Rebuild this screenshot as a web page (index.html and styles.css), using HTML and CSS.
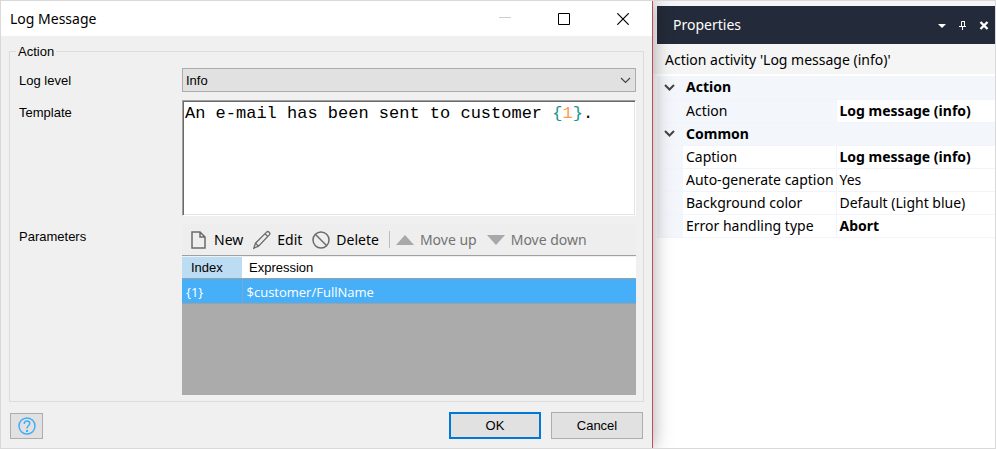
FILE: index.html
```html
<!DOCTYPE html>
<html lang="en">
<head>
<meta charset="utf-8">
<title>Log Message</title>
<link rel="stylesheet" href="styles.css">
</head>
<body>
<main class="workspace">
  <section class="dialog" aria-labelledby="dialog-title">
    <header class="titlebar">
      <h1 class="titlebar-text" id="dialog-title">Log Message</h1>
      <div class="window-controls">
        <button class="window-button" type="button" aria-label="Minimize" disabled>
          <svg width="12" height="12" viewBox="0 0 12 12"><path d="M0 4.500h12" stroke="#ccc" fill="none"/></svg>
        </button>
        <button class="window-button" type="button" aria-label="Maximize">
          <svg width="12" height="12" viewBox="0 0 12 12"><path d="M.5.5h11v11H.5z" stroke="#000" fill="none"/></svg>
        </button>
        <button class="window-button" type="button" aria-label="Close">
          <svg width="12" height="12" viewBox="0 0 12 12"><path d="M.3.3l11.400 11.400M11.700.3L.3 11.700" stroke="#000" stroke-width="1.200" fill="none"/></svg>
        </button>
      </div>
    </header>
    <form class="dialog-body">
      <fieldset class="group">
        <legend class="group-title">Action</legend>
        <div class="fields">
          <label class="field-label" for="log-level">Log level</label>
          <div class="select-box">
            <select class="select" id="log-level">
              <option>Info</option>
            </select>
            <svg class="select-arrow" width="11" height="7" viewBox="0 0 11 7"><path d="M1 1l4.500 4.500L10 1" stroke="#444" stroke-width="1.200" fill="none"/></svg>
          </div>
          <span class="field-label" id="template-label">Template</span>
          <div class="editor" contenteditable="true" role="textbox" aria-multiline="true" aria-labelledby="template-label" spellcheck="false">An e-mail has been sent to customer <span class="brace">{</span><span class="number">1</span><span class="brace">}</span>.</div>
          <span class="field-label" id="params-label">Parameters</span>
          <div class="params">
            <div class="toolbar" role="toolbar" aria-labelledby="params-label">
              <button class="tool" type="button">
                <svg width="18" height="20" viewBox="0 0 18 20"><path d="M2 2h8l5 5v11H2zM10 2v5h5" stroke="#6b6b6b" stroke-width="1.500" fill="none"/></svg>
                New
              </button>
              <button class="tool" type="button">
                <svg width="18" height="20" viewBox="0 0 18 20"><path d="M.8 18.200l1.700-5L13.800 1.900c1.300-1.200 4 1.200 2.700 2.700L5.500 16.200zM2.500 13.200l3 3M12 3.700l2.900 2.900" stroke="#6b6b6b" stroke-width="1.300" fill="none"/></svg>
                Edit
              </button>
              <button class="tool" type="button">
                <svg width="18" height="20" viewBox="0 0 18 20"><g stroke="#6b6b6b" stroke-width="1.500" fill="none"><circle cx="9" cy="10" r="8"/><path d="M3.300 4.300l11.400 11.400"/></g></svg>
                Delete
              </button>
              <span class="tool-divider"></span>
              <button class="tool" type="button" disabled>
                <svg width="18" height="20" viewBox="0 0 18 20"><path d="M0 15L9 5l9 10z" fill="#a8a8a8"/></svg>
                Move up
              </button>
              <button class="tool" type="button" disabled>
                <svg width="18" height="20" viewBox="0 0 18 20"><path d="M0 5l9 10 9-10z" fill="#a8a8a8"/></svg>
                Move down
              </button>
            </div>
            <div class="grid-area">
              <table class="params-table" aria-labelledby="params-label">
                <thead>
                  <tr><th class="index-col" scope="col">Index</th><th scope="col">Expression</th></tr>
                </thead>
                <tbody>
                  <tr><td>{1}</td><td>$customer/FullName</td></tr>
                </tbody>
              </table>
            </div>
          </div>
        </div>
      </fieldset>
      <footer class="dialog-footer">
        <button class="push help" type="button" aria-label="Help">
          <svg width="18" height="18" viewBox="0 0 18 18"><g stroke="#41adf8" stroke-width="1.500" fill="none"><circle cx="9" cy="9" r="8"/><path d="M6.300 7V6.300C6.300 3.300 11.700 3.300 11.700 6.500C11.700 8.500 9 8.500 9 11.500"/></g><path d="M8 13h2v2H8z" fill="#41adf8"/></svg>
        </button>
        <div class="footer-actions">
          <button class="push push-default" type="submit">OK</button>
          <button class="push" type="button">Cancel</button>
        </div>
      </footer>
    </form>
  </section>

  <aside class="properties" aria-labelledby="properties-title">
    <header class="pane-header">
      <h2 class="pane-title" id="properties-title">Properties</h2>
      <div class="pane-controls">
        <button class="pane-button" type="button" aria-label="Window position">
          <svg width="10" height="10" viewBox="0 0 10 10"><path d="M1 4h8L5 8z" fill="#fff"/></svg>
        </button>
        <button class="pane-button" type="button" aria-label="Pin">
          <svg width="10" height="10" viewBox="0 0 10 10"><path d="M3.500 6V1.500h3V6M1 6.500h7M4.500 6.500V10" stroke="#fff" fill="none"/><path d="M6 1h1v5H6z" fill="#fff"/></svg>
        </button>
        <button class="pane-button" type="button" aria-label="Close pane">
          <svg width="10" height="10" viewBox="0 0 10 10"><path d="M1.500 2l7 7M8.500 2l-7 7" stroke="#fff" stroke-width="2.400" fill="none"/></svg>
        </button>
      </div>
    </header>
    <p class="pane-subject">Action activity 'Log message (info)'</p>
    <table class="props">
      <colgroup><col class="gutter-col"><col class="name-col"><col></colgroup>
      <tbody>
        <tr class="category">
          <td class="gutter"><svg width="11" height="7" viewBox="0 0 11 7"><path d="M1 1l4.500 4.500L10 1" stroke="#444" stroke-width="2" fill="none"/></svg></td>
          <th colspan="2" scope="rowgroup">Action</th>
        </tr>
        <tr class="selected"><td class="gutter"></td><th scope="row">Action</th><td class="changed">Log message (info)</td></tr>
      </tbody>
      <tbody>
        <tr class="category">
          <td class="gutter"><svg width="11" height="7" viewBox="0 0 11 7"><path d="M1 1l4.500 4.500L10 1" stroke="#444" stroke-width="2" fill="none"/></svg></td>
          <th colspan="2" scope="rowgroup">Common</th>
        </tr>
        <tr><td class="gutter"></td><th scope="row">Caption</th><td class="changed">Log message (info)</td></tr>
        <tr><td class="gutter"></td><th scope="row">Auto-generate caption</th><td>Yes</td></tr>
        <tr><td class="gutter"></td><th scope="row">Background color</th><td>Default (Light blue)</td></tr>
        <tr><td class="gutter"></td><th scope="row">Error handling type</th><td class="changed">Abort</td></tr>
      </tbody>
    </table>
  </aside>
</main>
</body>
</html>
```
FILE: styles.css
```css
* {
  box-sizing: border-box;
}

body {
  margin: 0;
  font-family: "Liberation Sans", Arial, sans-serif;
  font-size: 13px;
  color: #000;
}

button,
select {
  font: inherit;
  color: inherit;
}

svg {
  display: block;
  flex: none;
}

.workspace {
  display: flex;
  min-height: 100vh;
  border: 1px solid #d9d9d9;
  background: #fff;
}

/* Dialog */

.dialog {
  flex: 1;
  min-width: 0;
  display: flex;
  flex-direction: column;
  position: relative;
  z-index: 1;
  background: #f0f0f0;
  border-right: 1px solid #c04d5c;
  box-shadow: 0 0 18px rgba(0, 0, 0, 0.35);
  clip-path: inset(0 -24px 0 0);
}

.titlebar {
  display: flex;
  justify-content: space-between;
  align-items: center;
  height: 35px;
  padding-left: 9px;
  background: #fff;
}

.titlebar-text {
  margin: 0;
  font: 14px/20px "Noto Sans", "Open Sans", sans-serif;
}

.window-controls {
  display: flex;
}

.window-button {
  display: grid;
  place-items: center;
  width: 59px;
  height: 32px;
  padding: 0;
  border: 0;
  background: none;
}

.dialog-body {
  flex: 1;
  display: flex;
  flex-direction: column;
  padding: 7px 8px 9px;
}

.group {
  flex: 1;
  min-width: 0;
  display: flex;
  flex-direction: column;
  margin: 0;
  padding: 8px 7px 6px 9px;
  border: 1px solid #dcdcdc;
}

.group-title {
  margin-left: -3px;
  padding: 0 2px;
  line-height: 17px;
}

.fields {
  flex: 1;
  display: grid;
  grid-template-columns: 163px minmax(0, 1fr);
  grid-template-rows: 24px 116px 1fr;
  row-gap: 8px;
}

.field-label {
  line-height: 25px;
}

.select-box {
  position: relative;
}

.select {
  appearance: none;
  width: 100%;
  height: 24px;
  padding: 0 24px 0 3px;
  border: 1px solid #adadad;
  border-radius: 0;
  background: #e1e1e1;
}

.select-arrow {
  position: absolute;
  right: 5px;
  top: 9px;
  pointer-events: none;
}

.editor {
  padding: 2px;
  border: 1px solid #a0a0a0;
  border-right-color: #fff;
  border-bottom-color: #fff;
  box-shadow: inset 1px 1px #696969, inset -1px -1px #e3e3e3;
  background: #fff;
  font: 17px/22px "Liberation Mono", "Courier New", monospace;
  overflow: auto;
}

.brace {
  color: #18938f;
}

.number {
  color: #ff9a4d;
}

.params {
  display: flex;
  flex-direction: column;
  min-width: 0;
}

.toolbar {
  display: flex;
  align-items: center;
  gap: 10px;
  height: 31px;
  padding-left: 8px;
  background: #eee;
  font: 14px/20px "Noto Sans", "Open Sans", sans-serif;
}

.tool {
  display: flex;
  align-items: center;
  gap: 6px;
  padding: 0;
  border: 0;
  background: none;
  white-space: nowrap;
}

.tool:disabled {
  color: #737373;
}

.tool-divider {
  width: 1px;
  height: 17px;
  margin-right: -4px;
  background: #bdbdbd;
}

.grid-area {
  flex: 1;
  border-top: 1px solid #a0a0a0;
  background: #ababab;
}

.params-table {
  width: 100%;
  table-layout: fixed;
  border-collapse: collapse;
}

.params-table th {
  height: 22px;
  padding: 0 7px;
  border-top: 1px solid #f0f0f0;
  border-bottom: 1px solid #a0a0a0;
  background: #fff;
  font-weight: normal;
  text-align: left;
}

.params-table .index-col {
  width: 60px;
  padding-left: 9px;
  background: #bcdcf4;
}

.params-table td {
  height: 25px;
  padding: 2px 4px 0;
  border-bottom: 1px solid #a0a0a0;
  background: #47aff8;
  color: #fff;
  font: 13px/20px "Open Sans", "Noto Sans", sans-serif;
}

.params-table td + td {
  border-left: 1px solid #7ba9c8;
}

.dialog-footer {
  display: flex;
  justify-content: space-between;
  align-items: flex-end;
  padding: 10px 1px 0;
}

.footer-actions {
  display: flex;
  gap: 10px;
}

.push {
  display: grid;
  place-items: center;
  width: 92px;
  height: 27px;
  padding: 0;
  border: 1px solid #adadad;
  background: #e1e1e1;
}

.push-default {
  border: 2px solid #0078d7;
}

.help {
  width: 33px;
  height: 26px;
}

/* Properties pane */

.properties {
  flex: none;
  width: 342px;
  padding: 5px 0 0 4px;
  background: linear-gradient(#f5f5f5 73px, #fff 73px);
  font: 14px/22px "Noto Sans", "Open Sans", sans-serif;
}

.pane-header {
  display: flex;
  justify-content: space-between;
  align-items: center;
  height: 38px;
  padding: 0 6px 0 16px;
  background: #232a39;
  color: #fff;
}

.pane-title {
  margin: 0;
  font: inherit;
}

.pane-controls {
  display: flex;
  gap: 11px;
}

.pane-button {
  padding: 0;
  border: 0;
  background: none;
}

.pane-subject {
  margin: 0;
  padding: 5px 8px 3px;
  background: #f5f5f5;
}

.props {
  width: 100%;
  margin-top: 2px;
  table-layout: fixed;
  border-collapse: collapse;
}

.gutter-col {
  width: 26px;
}

.name-col {
  width: 153px;
}

.props th,
.props td {
  height: 23px;
  padding: 0 3px;
  border-bottom: 1px solid #f1f5fb;
  font-weight: normal;
  text-align: left;
  white-space: nowrap;
  overflow: hidden;
}

.props th[scope="row"] {
  border-right: 1px solid #f1f5fb;
}

.props .gutter,
.props .category th,
.props .selected th {
  background: #f3f6fb;
}

.props .gutter {
  padding-left: 7px;
}

.props .category th,
.props .changed {
  font-weight: bold;
}
```
